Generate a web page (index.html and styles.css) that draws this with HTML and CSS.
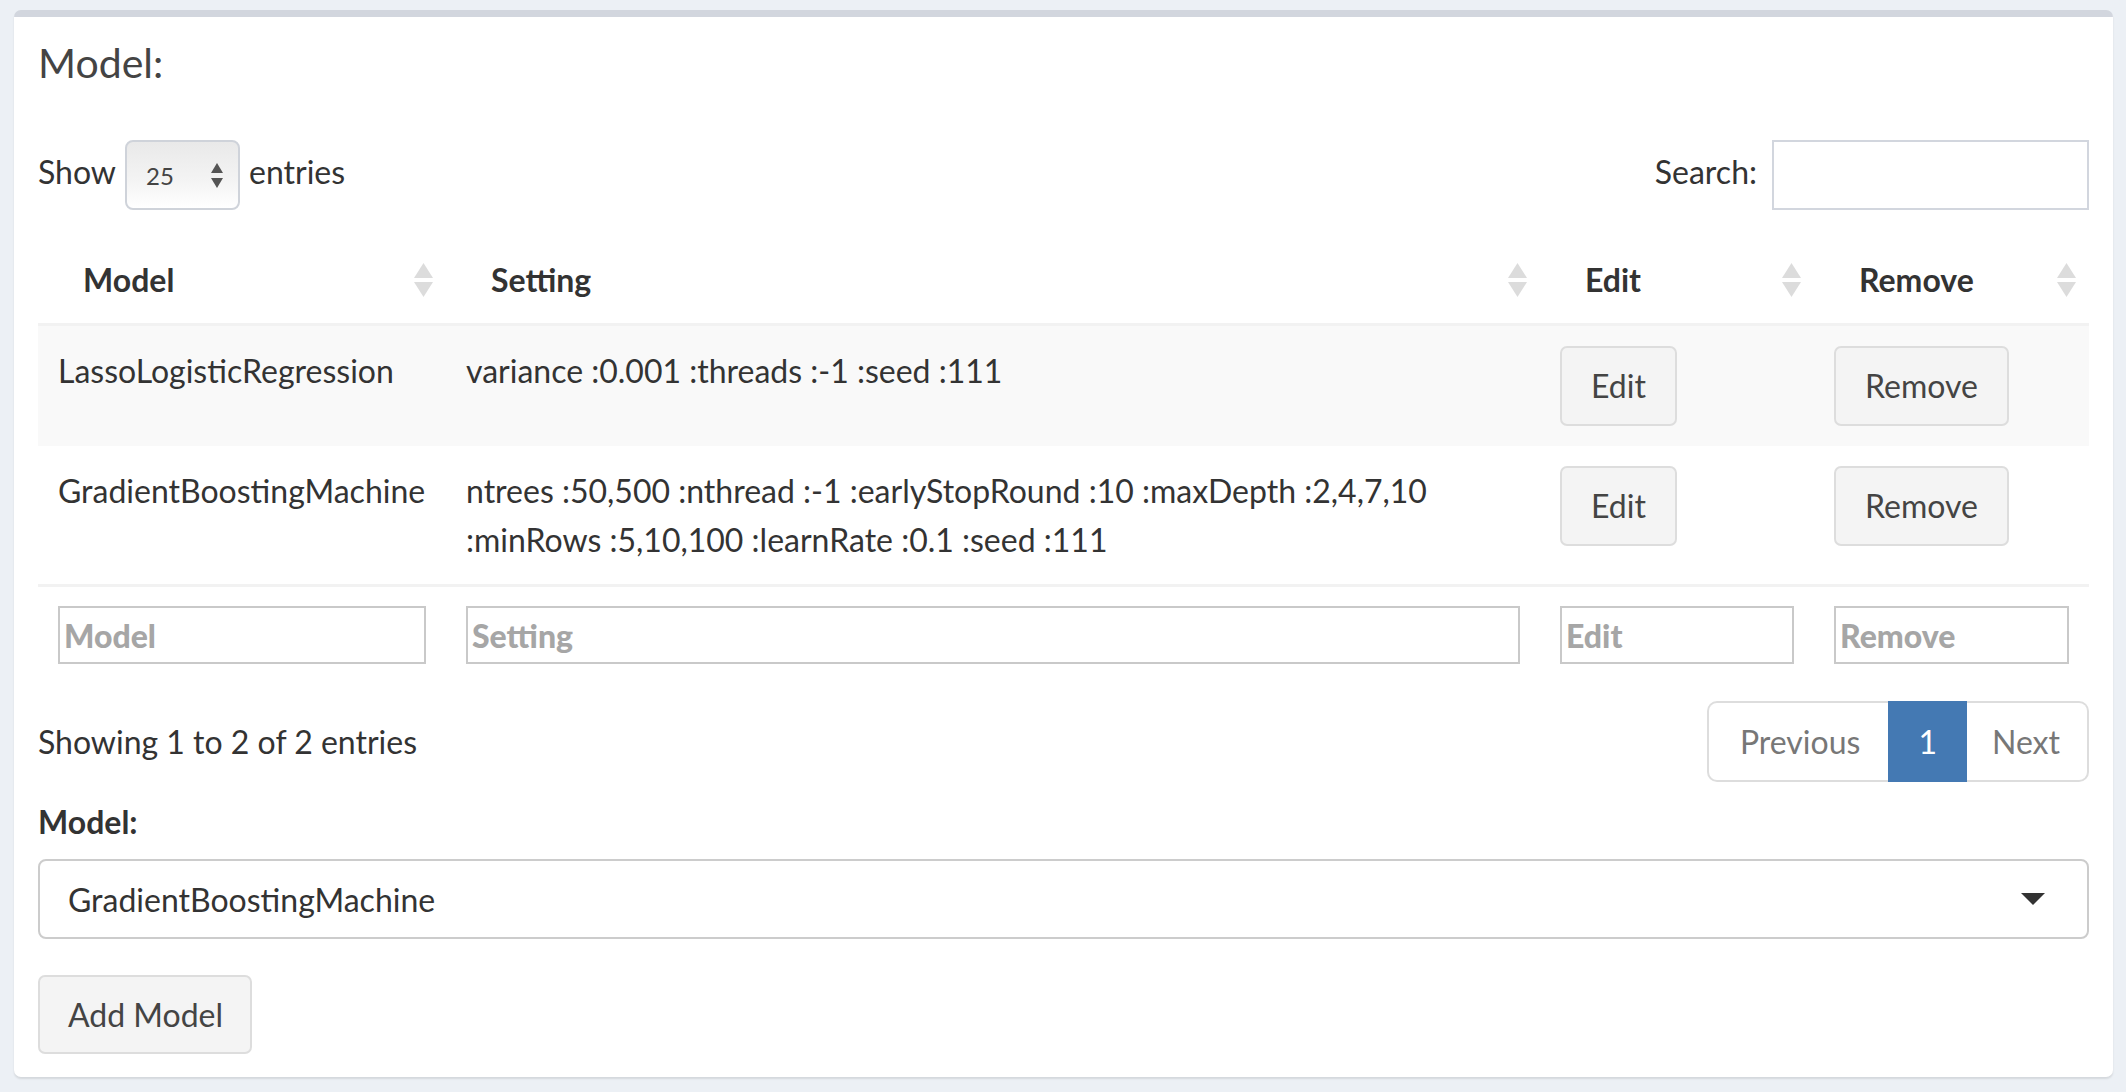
FILE: index.html
```html
<!DOCTYPE html>
<html>
<head>
<meta charset="utf-8">
<title>Model</title>
<link rel="stylesheet" href="styles.css">
</head>
<body>
<div class="box">
  <div class="box-header"><h3 class="box-title">Model:</h3></div>
  <div class="box-body">
    <div class="dt-top">
      <div class="dt-length">
        <span class="lbl">Show</span>
        <span class="len-select"><span class="len-val">25</span><svg class="updown" width="12" height="25" viewBox="0 0 12 25"><polygon points="6,0 12,10 0,10"/><polygon points="0,15 12,15 6,25"/></svg></span>
        <span class="lbl">entries</span>
      </div>
      <div class="dt-search">
        <span class="lbl">Search:</span>
        <span class="search-input"></span>
      </div>
    </div>
    <table class="dt">
      <colgroup><col class="c1"><col class="c2"><col class="c3"><col class="c4"></colgroup>
      <thead>
        <tr>
          <th><div class="th-in"><span>Model</span><svg class="sort" width="21" height="34" viewBox="0 0 21 34"><polygon points="10.5,0 20,15 1,15"/><polygon points="1,19 20,19 10.5,34"/></svg></div></th>
          <th><div class="th-in"><span>Setting</span><svg class="sort" width="21" height="34" viewBox="0 0 21 34"><polygon points="10.5,0 20,15 1,15"/><polygon points="1,19 20,19 10.5,34"/></svg></div></th>
          <th><div class="th-in"><span>Edit</span><svg class="sort" width="21" height="34" viewBox="0 0 21 34"><polygon points="10.5,0 20,15 1,15"/><polygon points="1,19 20,19 10.5,34"/></svg></div></th>
          <th><div class="th-in"><span>Remove</span><svg class="sort" width="21" height="34" viewBox="0 0 21 34"><polygon points="10.5,0 20,15 1,15"/><polygon points="1,19 20,19 10.5,34"/></svg></div></th>
        </tr>
      </thead>
      <tbody>
        <tr class="odd">
          <td>LassoLogisticRegression</td>
          <td>variance :0.001 :threads :-1 :seed :111</td>
          <td><button class="btn">Edit</button></td>
          <td><button class="btn">Remove</button></td>
        </tr>
        <tr>
          <td>GradientBoostingMachine</td>
          <td>ntrees :50,500 :nthread :-1 :earlyStopRound :10 :maxDepth :2,4,7,10<br>:minRows :5,10,100 :learnRate :0.1 :seed :111</td>
          <td><button class="btn">Edit</button></td>
          <td><button class="btn">Remove</button></td>
        </tr>
      </tbody>
      <tfoot>
        <tr>
          <td><input class="filter" type="text" placeholder="Model"></td>
          <td><input class="filter" type="text" placeholder="Setting"></td>
          <td><input class="filter" type="text" placeholder="Edit"></td>
          <td><input class="filter" type="text" placeholder="Remove"></td>
        </tr>
      </tfoot>
    </table>
    <div class="dt-bottom">
      <div class="dt-info">Showing 1 to 2 of 2 entries</div>
      <ul class="pagination">
        <li class="pg prev">Previous</li>
        <li class="pg active">1</li>
        <li class="pg next">Next</li>
      </ul>
    </div>
    <div class="form-group">
      <label class="ctl-label">Model:</label>
      <div class="selectize">
        <span>GradientBoostingMachine</span>
        <svg class="caret" width="24" height="12" viewBox="0 0 24 12"><polygon points="0,0 24,0 12,12"/></svg>
      </div>
    </div>
    <button class="btn add">Add Model</button>
  </div>
</div>
</body>
</html>
```

FILE: styles.css
```css
* { box-sizing: border-box; }
html, body { margin: 0; }
body {
  background: #ecf0f5;
  padding: 10px 13px 10px 14px;
  font-family: Lato, "Noto Sans", sans-serif;
  font-size: 32px;
  line-height: 49px;
  color: #333;
}
.box {
  background: #fff;
  border-top: 7px solid #d2d6de;
  border-radius: 7px;
  box-shadow: 0 2px 2px rgba(0, 0, 0, 0.1);
}
.box-header { padding: 24px 24px 25px; }
.box-title {
  margin: 0;
  font-size: 41px;
  line-height: 44px;
  font-weight: 400;
  color: #444;
}
.box-body { padding: 24px 24px 23px; }

.dt-top {
  display: flex;
  justify-content: space-between;
  align-items: flex-end;
  height: 76px;
}
.dt-length, .dt-search {
  display: flex;
  align-items: center;
  height: 70px;
}
.lbl { padding-bottom: 8px; }
.len-select {
  display: flex;
  align-items: center;
  justify-content: space-between;
  width: 115px;
  height: 70px;
  margin: 0 9px;
  padding: 0 15px 0 19px;
  border: 2px solid #cfd3da;
  border-radius: 8px;
  background: linear-gradient(#e9e9e9, #f4f4f4 60%, #ffffff);
  font-size: 24px;
  color: #444;
}
.updown { fill: #555; }
.search-input {
  width: 317px;
  height: 70px;
  margin-left: 15px;
  border: 2px solid #d2d6de;
  background: #fff;
}

.dt {
  width: 100%;
  border-collapse: collapse;
  table-layout: fixed;
  margin-top: 15px;
}
.c1 { width: 408px; }
.c2 { width: 1094px; }
.c3 { width: 274px; }
.c4 { width: 275px; }
.dt th {
  padding: 30px 12px 19px 45px;
  text-align: left;
  font-weight: 700;
  vertical-align: top;
  border-bottom: 3px solid #f2f2f2;
}
.th-in {
  display: flex;
  justify-content: space-between;
  align-items: center;
}
.sort { fill: #dcdcdc; }
.dt td {
  padding: 20px;
  vertical-align: top;
}
.dt tbody tr.odd td { background: #f9f9f9; }
.dt tfoot td {
  border-top: 3px solid #f2f2f2;
  padding: 19px 20px 20px;
}
.btn {
  display: inline-block;
  height: 80px;
  padding: 0 29px;
  border: 2px solid #ddd;
  border-radius: 7px;
  background: #f4f4f4;
  color: #444;
  font-family: inherit;
  font-size: 32px;
  line-height: 76px;
}
.filter {
  display: block;
  width: 100%;
  height: 58px;
  margin: 0;
  padding: 0 4px;
  border: 2px solid #c9c9c9;
  border-radius: 0;
  font-family: Lato, "Noto Sans", sans-serif;
  font-size: 32px;
  font-weight: 900;
  color: #333;
  background: #fff;
}
.filter::placeholder {
  color: #a6a6a6;
  opacity: 1;
  font-family: Lato, "Noto Sans", sans-serif;
  font-weight: 900;
}

.dt-bottom {
  display: flex;
  justify-content: space-between;
  align-items: center;
  margin-top: 17px;
}
.pagination {
  display: flex;
  list-style: none;
  margin: 0;
  padding: 0;
}
.pg {
  height: 81px;
  line-height: 77px;
  border: 2px solid #ddd;
  color: #777;
}
.prev { padding: 0 28px 0 31px; border-right: 0; border-radius: 10px 0 0 10px; }
.active { padding: 0 28px; background: #4479b3; border-color: #4479b3; color: #fff; }
.next { padding: 0 27px 0 25px; border-left: 0; border-radius: 0 10px 10px 0; }

.form-group { margin-top: 15px; }
.ctl-label {
  display: block;
  font-weight: 700;
  margin-bottom: 13px;
}
.selectize {
  display: flex;
  align-items: center;
  justify-content: space-between;
  height: 80px;
  padding: 0 42px 0 28px;
  border: 2px solid #ccc;
  border-radius: 8px;
  color: #333;
}
.caret { fill: #333; }
.add {
  display: block;
  margin-top: 36px;
  height: 79px;
  padding: 0 27px 0 28px;
  line-height: 75px;
}
```
